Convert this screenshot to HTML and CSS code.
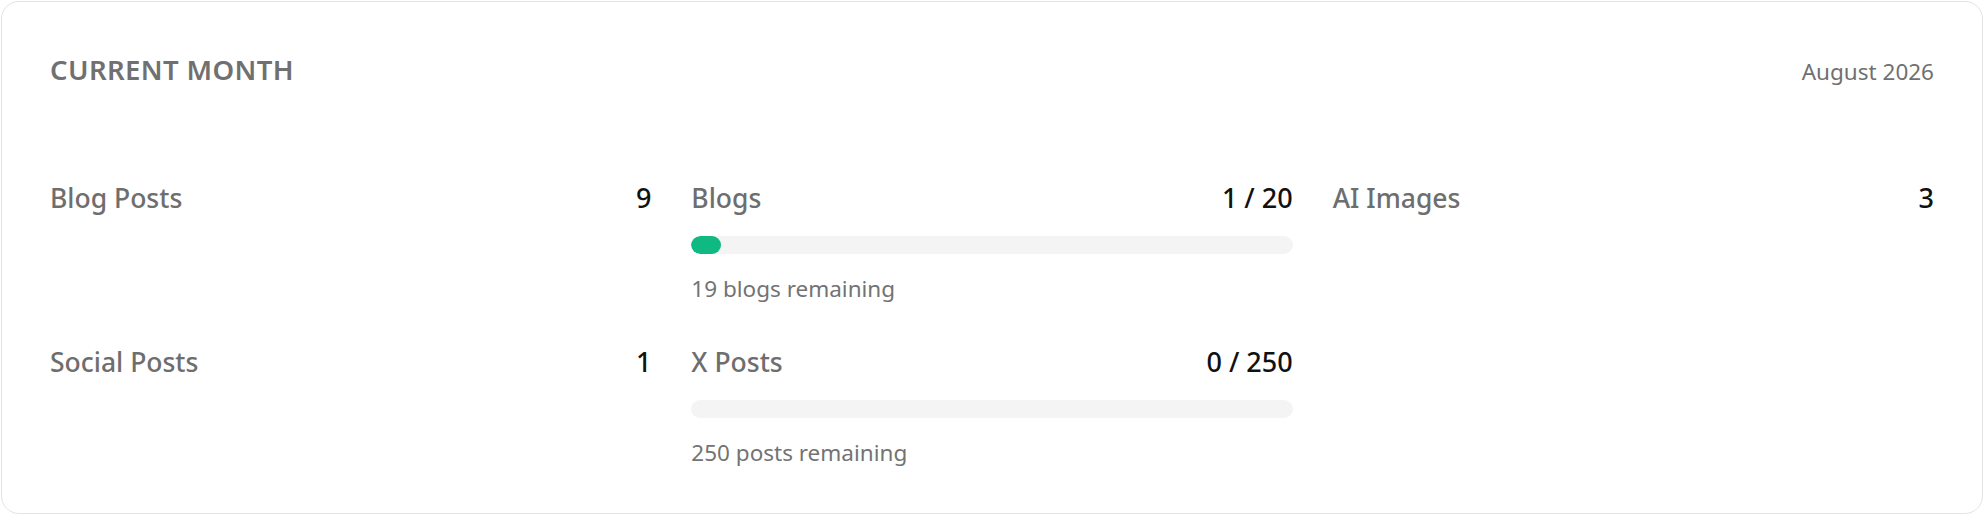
FILE: index.html
```html
<!DOCTYPE html>
<html lang="en">
<head>
<meta charset="utf-8">
<title>Current Month</title>
<link rel="stylesheet" href="styles.css">
</head>
<body>
  <div class="page">
    <section class="card">
      <header class="card-header">
        <h2 class="title">Current Month</h2>
        <span class="date">August 2026</span>
      </header>
      <div class="stats">
        <div class="stat">
          <div class="stat-row"><span class="label">Blog Posts</span><span class="value">9</span></div>
        </div>
        <div class="stat">
          <div class="stat-row"><span class="label">Blogs</span><span class="value">1 / 20</span></div>
          <div class="bar"><div class="bar-fill" style="width:5%"></div></div>
          <div class="remaining">19 blogs remaining</div>
        </div>
        <div class="stat">
          <div class="stat-row"><span class="label">AI Images</span><span class="value">3</span></div>
        </div>
        <div class="stat">
          <div class="stat-row"><span class="label">Social Posts</span><span class="value">1</span></div>
        </div>
        <div class="stat">
          <div class="stat-row"><span class="label">X Posts</span><span class="value">0 / 250</span></div>
          <div class="bar"><div class="bar-fill" style="width:0%"></div></div>
          <div class="remaining">250 posts remaining</div>
        </div>
        <div class="stat"></div>
      </div>
    </section>
  </div>
</body>
</html>
```
FILE: styles.css
```css
* { box-sizing: border-box; }
html, body { margin: 0; padding: 0; background: #ffffff; }
body {
  font-family: "Noto Sans", "Open Sans", "Liberation Sans", sans-serif;
  color: #111;
}
.page { padding: 1px 1px 2px 1px; }
.card {
  border: 1px solid #e3e3e3;
  border-radius: 18px;
  padding: 50px 48px 45px 48px;
  background: #fff;
}
.card-header {
  display: flex;
  justify-content: space-between;
  align-items: center;
  height: 36px;
  margin-bottom: 92px;
}
.title {
  margin: 0;
  font-size: 27.5px;
  font-weight: 600;
  text-transform: uppercase;
  letter-spacing: 0.4px;
  color: #707070;
  line-height: 36px;
}
.date {
  font-size: 22.5px;
  color: #707070;
  line-height: 36px;
  padding-top: 4px;
}
.stats {
  display: grid;
  grid-template-columns: repeat(3, 1fr);
  column-gap: 40px;
  row-gap: 40px;
}
.stat-row {
  display: flex;
  justify-content: space-between;
  align-items: baseline;
  line-height: 36px;
}
.label {
  font-size: 26.5px;
  font-weight: 500;
  color: #6e6e6e;
}
.value {
  font-size: 27px;
  font-weight: 500;
  color: #111;
}
.bar {
  margin-top: 20px;
  height: 18px;
  border-radius: 9px;
  background: #f4f4f4;
  overflow: hidden;
}
.bar-fill {
  height: 100%;
  background: #10b981;
  border-radius: 9px;
}
.remaining {
  margin-top: 20px;
  font-size: 22.5px;
  line-height: 30px;
  color: #737373;
}
```
